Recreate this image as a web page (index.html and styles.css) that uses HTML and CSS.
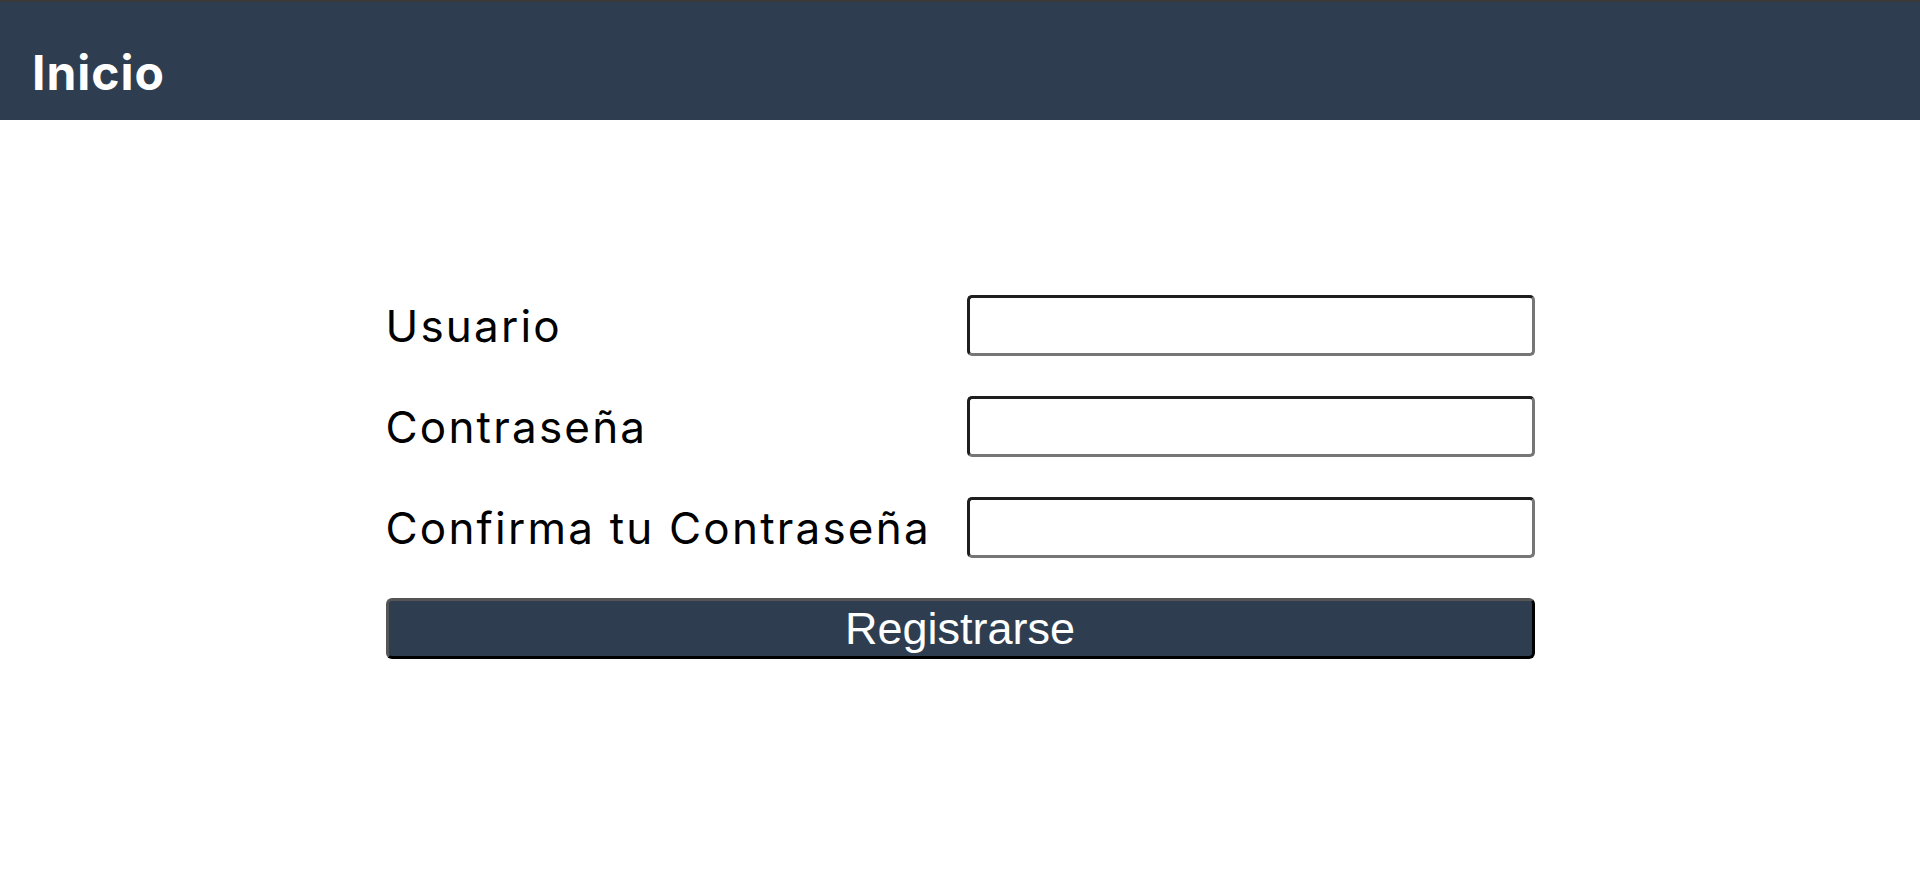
FILE: index.html
```html
<!DOCTYPE html>
<html lang="es">
<head>
<meta charset="utf-8">
<title>Inicio</title>
<link rel="stylesheet" href="styles.css">
</head>
<body>
<header class="topbar">
  <h1 class="brand">Inicio</h1>
</header>
<main class="page">
  <form class="register">
    <div class="row">
      <label class="field-label" for="user">Usuario</label>
      <input class="field-input" id="user" type="text">
    </div>
    <div class="row">
      <label class="field-label" for="pass">Contraseña</label>
      <input class="field-input" id="pass" type="password">
    </div>
    <div class="row">
      <label class="field-label" for="pass2">Confirma tu Contraseña</label>
      <input class="field-input" id="pass2" type="password">
    </div>
    <button class="submit" type="button">Registrarse</button>
  </form>
</main>
</body>
</html>
```

FILE: styles.css
```css
html, body {
  margin: 0;
  padding: 0;
  background: #ffffff;
}

body {
  font-family: Inter, "Liberation Sans", sans-serif;
  color: #000;
}

.topbar {
  background: #2e3e50;
  border-top: 2px solid #3a3a3a;
  height: 118px;
  box-sizing: content-box;
  padding: 0 0 0 32px;
}

.brand {
  margin: 0;
  padding-top: 47px;
  font-family: Inter, "Liberation Sans", sans-serif;
  font-weight: 700;
  font-size: 48px;
  line-height: 48px;
  color: #ffffff;
  letter-spacing: 1px;
}

.page {
  display: flex;
  justify-content: center;
  padding-top: 175px;
}

.register {
  width: 1149px;
  display: flex;
  flex-direction: column;
  gap: 40px;
}

.row {
  display: grid;
  grid-template-columns: 1fr 568px;
  align-items: center;
  height: 61px;
}

.field-label {
  font-family: Inter, "Liberation Sans", sans-serif;
  font-size: 44px;
  font-weight: 400;
  letter-spacing: 2.2px;
  padding-left: 0;
  padding-bottom: 0;
}

.field-input {
  box-sizing: border-box;
  height: 61px;
  width: 568px;
  margin: 0;
  border-style: solid;
  border-width: 3px;
  border-color: #1e1e1e #767676 #767676 #1e1e1e;
  border-radius: 5px;
  background: #fff;
  outline: none;
}

.submit {
  box-sizing: border-box;
  height: 61px;
  width: 100%;
  margin: 0;
  background: #2e3e50;
  color: #ffffff;
  border-style: solid;
  border-width: 3px;
  border-color: #555555 #000000 #000000 #555555;
  border-radius: 6px;
  font-family: "Liberation Sans", Arial, sans-serif;
  font-size: 45px;
  line-height: 1;
  padding: 0;
}
```
